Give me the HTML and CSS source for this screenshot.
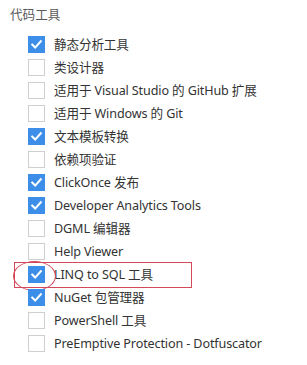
FILE: index.html
```html
<!DOCTYPE html>
<html lang="zh-CN">
<head>
<meta charset="utf-8">
<link rel="stylesheet" href="styles.css">
</head>
<body>
<div class="panel">
  <div class="title">代码工具</div>
  <ul class="list">
    <li class="item on"><span class="box"><svg viewBox="0 0 17 17"><path d="M3.6 8.6 L7 12 L13.4 4.8"/></svg></span><span class="label">静态分析工具</span></li>
    <li class="item"><span class="box"></span><span class="label">类设计器</span></li>
    <li class="item"><span class="box"></span><span class="label">适用于 Visual Studio 的 GitHub 扩展</span></li>
    <li class="item"><span class="box"></span><span class="label">适用于 Windows 的 Git</span></li>
    <li class="item on"><span class="box"><svg viewBox="0 0 17 17"><path d="M3.6 8.6 L7 12 L13.4 4.8"/></svg></span><span class="label">文本模板转换</span></li>
    <li class="item"><span class="box"></span><span class="label">依赖项验证</span></li>
    <li class="item on"><span class="box"><svg viewBox="0 0 17 17"><path d="M3.6 8.6 L7 12 L13.4 4.8"/></svg></span><span class="label">ClickOnce 发布</span></li>
    <li class="item on"><span class="box"><svg viewBox="0 0 17 17"><path d="M3.6 8.6 L7 12 L13.4 4.8"/></svg></span><span class="label">Developer Analytics Tools</span></li>
    <li class="item"><span class="box"></span><span class="label">DGML 编辑器</span></li>
    <li class="item"><span class="box"></span><span class="label">Help Viewer</span></li>
    <li class="item on marked"><span class="box"><svg viewBox="0 0 17 17"><path d="M3.6 8.6 L7 12 L13.4 4.8"/></svg></span><span class="label">LINQ to SQL 工具</span><span class="mark-rect"></span><span class="mark-ellipse"></span></li>
    <li class="item on"><span class="box"><svg viewBox="0 0 17 17"><path d="M3.6 8.6 L7 12 L13.4 4.8"/></svg></span><span class="label">NuGet 包管理器</span></li>
    <li class="item"><span class="box"></span><span class="label">PowerShell 工具</span></li>
    <li class="item"><span class="box"></span><span class="label">PreEmptive Protection - Dotfuscator</span></li>
  </ul>
</div>
</body>
</html>
```
FILE: styles.css
```css
html, body {
  margin: 0;
  padding: 0;
  background: #ffffff;
}
.panel {
  font-family: "Noto Sans", "Noto Sans CJK SC", sans-serif;
  font-size: 12.6px;
  letter-spacing: -0.13px;
  color: #333333;
  padding: 5px 0 0 10px;
}
.title {
  font-family: "Noto Sans CJK SC", sans-serif;
  font-size: 12.6px;
  letter-spacing: 0;
  color: #5a5a5a;
  height: 18px;
  line-height: 18px;
}
.list {
  list-style: none;
  margin: 10px 0 0 18px;
  padding: 0;
}
.item {
  position: relative;
  display: flex;
  align-items: center;
  height: 23px;
}
.box {
  flex: none;
  width: 17px;
  height: 17px;
  box-sizing: border-box;
  border: 1px solid #cfcfcf;
  background: #fff;
  margin-right: 9px;
  display: flex;
}
.item.on .box {
  background: #3c8ee8;
  border-color: #3c8ee8;
}
.box svg {
  width: 15px;
  height: 15px;
}
.box path {
  fill: none;
  stroke: #fff;
  stroke-width: 2.3;
  stroke-linecap: square;
}
.label {
  white-space: nowrap;
  line-height: 23px;
}
.mark-rect {
  position: absolute;
  left: -14px;
  top: -1px;
  width: 178px;
  height: 26px;
  box-sizing: border-box;
  border: 1px solid #d4485a;
}
.mark-ellipse {
  position: absolute;
  left: -15px;
  top: -2px;
  width: 43px;
  height: 30px;
  box-sizing: border-box;
  border: 1px solid #d4485a;
  border-radius: 50%;
}
```
